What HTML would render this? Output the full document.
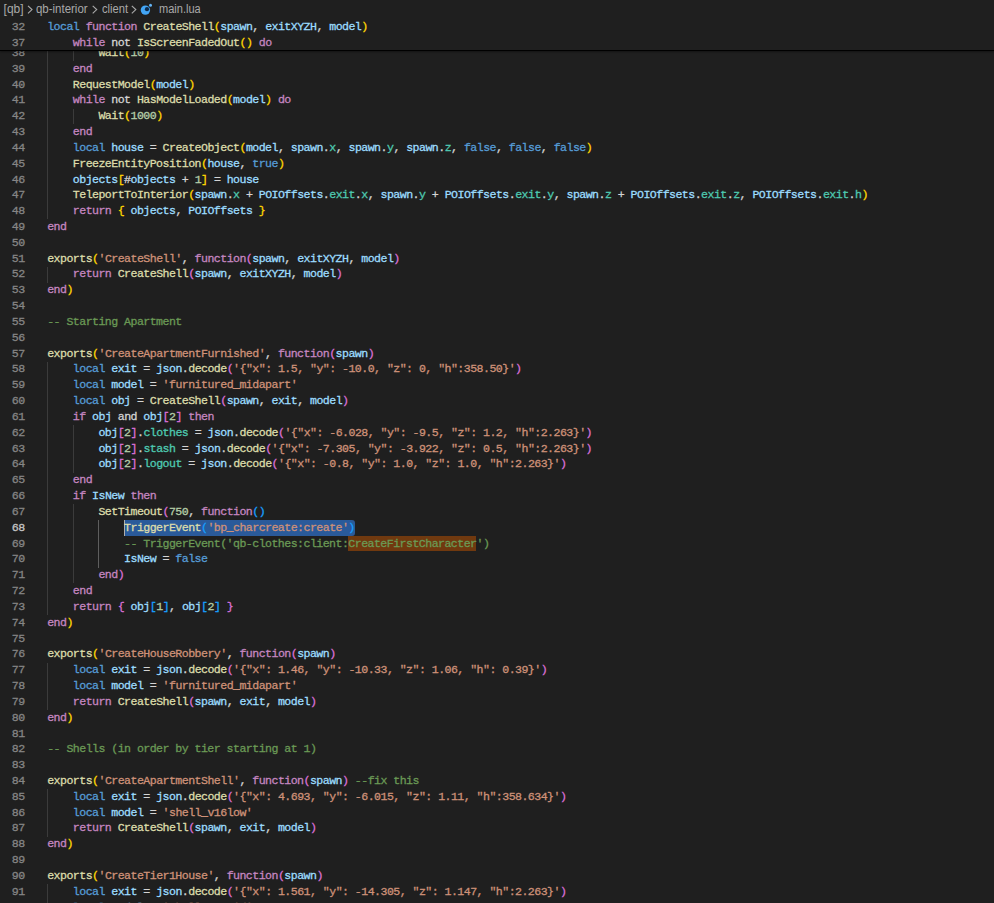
<!DOCTYPE html>
<html><head><meta charset="utf-8"><title>main.lua</title>
<style>
html,body{margin:0;padding:0;background:#1f1f1f;}
body{width:994px;height:903px;overflow:hidden;position:relative;font-family:"Liberation Mono","DejaVu Sans Mono",monospace;font-size:11.6px;color:#d4d4d4;}
.row{-webkit-text-stroke:0.3px currentColor;position:absolute;left:0;width:994px;height:16px;line-height:16px;white-space:pre;}
.ln{position:absolute;left:0;width:24.6px;text-align:right;color:#858585;letter-spacing:-0.55px;}
.ln.cl{color:#c6c6c6;}
.code{position:absolute;left:47.2px;letter-spacing:-0.55px;}
i{font-style:normal}
.k{color:#c586c0}.l{color:#569cd6}.f{color:#dcdcaa}.v{color:#9cdcfe}.t{color:#4ec9b0}
.s{color:#ce9178}.n{color:#b5cea8}.c{color:#6a9955}
.g{color:#ffd700}.p{color:#da70d6}.b{color:#179fff}
.gd{position:absolute;width:1px;background:#3b3b3b;}
.gd.ga{background:#5e5e5e;}
.sel{position:absolute;background:#2a5a9a;border-radius:0 3px 3px 0;}
.fm{position:absolute;background:#70390f;}
.cur{position:absolute;width:1.5px;background:#aeafad;}
#sticky{position:absolute;left:0;top:0;width:994px;height:50px;background:#1f1f1f;border-bottom:1px solid #000;box-shadow:0 1px 2px rgba(0,0,0,.4);box-sizing:content-box;}
#bc{position:absolute;left:0;top:0;height:18px;width:994px;font-family:"Liberation Sans",sans-serif;font-size:12px;color:#a9a9a9;white-space:pre;}
#bc span{position:absolute;top:2px;line-height:14px;display:inline-block;transform-origin:0 50%;}
</style></head><body>
<div class="gd" style="left:47.20px;top:45.27px;height:174.12px"></div>
<div class="gd" style="left:72.84px;top:45.27px;height:15.83px"></div>
<div class="gd" style="left:72.84px;top:108.59px;height:15.83px"></div>
<div class="gd" style="left:47.20px;top:266.88px;height:15.83px"></div>
<div class="gd" style="left:47.20px;top:361.85px;height:253.26px"></div>
<div class="gd" style="left:72.84px;top:425.17px;height:47.49px"></div>
<div class="gd" style="left:72.84px;top:504.31px;height:79.14px"></div>
<div class="gd ga" style="left:98.48px;top:520.14px;height:47.49px"></div>
<div class="gd" style="left:47.20px;top:662.60px;height:47.49px"></div>
<div class="gd" style="left:47.20px;top:789.23px;height:47.49px"></div>
<div class="gd" style="left:47.20px;top:884.21px;height:31.66px"></div>
<div class="sel" style="left:124.12px;top:520.14px;width:230.76px;height:15.83px"></div>
<div class="fm" style="left:348.47px;top:535.97px;width:127.20px;height:14.83px"></div>
<div class="cur" style="left:123.62px;top:520.14px;height:15.83px"></div>
<div class="row" style="top:45px"><span class="ln">38</span><span class="code">        <i class="f">Wait</i><i class="g">(</i><i class="n">10</i><i class="g">)</i></span></div>
<div class="row" style="top:61px"><span class="ln">39</span><span class="code">    <i class="k">end</i></span></div>
<div class="row" style="top:77px"><span class="ln">40</span><span class="code">    <i class="f">RequestModel</i><i class="g">(</i><i class="v">model</i><i class="g">)</i></span></div>
<div class="row" style="top:92px"><span class="ln">41</span><span class="code">    <i class="k">while</i> not <i class="f">HasModelLoaded</i><i class="g">(</i><i class="v">model</i><i class="g">)</i> <i class="k">do</i></span></div>
<div class="row" style="top:108px"><span class="ln">42</span><span class="code">        <i class="f">Wait</i><i class="g">(</i><i class="n">1000</i><i class="g">)</i></span></div>
<div class="row" style="top:124px"><span class="ln">43</span><span class="code">    <i class="k">end</i></span></div>
<div class="row" style="top:140px"><span class="ln">44</span><span class="code">    <i class="l">local</i> <i class="v">house</i> = <i class="f">CreateObject</i><i class="g">(</i><i class="v">model</i>, <i class="v">spawn</i>.<i class="t">x</i>, <i class="v">spawn</i>.<i class="t">y</i>, <i class="v">spawn</i>.<i class="t">z</i>, <i class="l">false</i>, <i class="l">false</i>, <i class="l">false</i><i class="g">)</i></span></div>
<div class="row" style="top:156px"><span class="ln">45</span><span class="code">    <i class="f">FreezeEntityPosition</i><i class="g">(</i><i class="v">house</i>, <i class="l">true</i><i class="g">)</i></span></div>
<div class="row" style="top:172px"><span class="ln">46</span><span class="code">    <i class="v">objects</i><i class="g">[</i>#<i class="v">objects</i> + <i class="n">1</i><i class="g">]</i> = <i class="v">house</i></span></div>
<div class="row" style="top:187px"><span class="ln">47</span><span class="code">    <i class="f">TeleportToInterior</i><i class="g">(</i><i class="v">spawn</i>.<i class="t">x</i> + <i class="v">POIOffsets</i>.<i class="t">exit</i>.<i class="t">x</i>, <i class="v">spawn</i>.<i class="t">y</i> + <i class="v">POIOffsets</i>.<i class="t">exit</i>.<i class="t">y</i>, <i class="v">spawn</i>.<i class="t">z</i> + <i class="v">POIOffsets</i>.<i class="t">exit</i>.<i class="t">z</i>, <i class="v">POIOffsets</i>.<i class="t">exit</i>.<i class="t">h</i><i class="g">)</i></span></div>
<div class="row" style="top:203px"><span class="ln">48</span><span class="code">    <i class="k">return</i> <i class="g">{</i> <i class="v">objects</i>, <i class="v">POIOffsets</i> <i class="g">}</i></span></div>
<div class="row" style="top:219px"><span class="ln">49</span><span class="code"><i class="k">end</i></span></div>
<div class="row" style="top:235px"><span class="ln">50</span><span class="code"></span></div>
<div class="row" style="top:251px"><span class="ln">51</span><span class="code"><i class="f">exports</i><i class="g">(</i><i class="s">'CreateShell'</i>, <i class="k">function</i><i class="p">(</i><i class="v">spawn</i>, <i class="v">exitXYZH</i>, <i class="v">model</i><i class="p">)</i></span></div>
<div class="row" style="top:266px"><span class="ln">52</span><span class="code">    <i class="k">return</i> <i class="f">CreateShell</i><i class="p">(</i><i class="v">spawn</i>, <i class="v">exitXYZH</i>, <i class="v">model</i><i class="p">)</i></span></div>
<div class="row" style="top:282px"><span class="ln">53</span><span class="code"><i class="k">end</i><i class="g">)</i></span></div>
<div class="row" style="top:298px"><span class="ln">54</span><span class="code"></span></div>
<div class="row" style="top:314px"><span class="ln">55</span><span class="code"><i class="c">-- Starting Apartment</i></span></div>
<div class="row" style="top:330px"><span class="ln">56</span><span class="code"></span></div>
<div class="row" style="top:346px"><span class="ln">57</span><span class="code"><i class="f">exports</i><i class="g">(</i><i class="s">'CreateApartmentFurnished'</i>, <i class="k">function</i><i class="p">(</i><i class="v">spawn</i><i class="p">)</i></span></div>
<div class="row" style="top:361px"><span class="ln">58</span><span class="code">    <i class="l">local</i> <i class="v">exit</i> = <i class="v">json</i>.<i class="f">decode</i><i class="p">(</i><i class="s">'{"x": 1.5, "y": -10.0, "z": 0, "h":358.50}'</i><i class="p">)</i></span></div>
<div class="row" style="top:377px"><span class="ln">59</span><span class="code">    <i class="l">local</i> <i class="v">model</i> = <i class="s">'furnitured_midapart'</i></span></div>
<div class="row" style="top:393px"><span class="ln">60</span><span class="code">    <i class="l">local</i> <i class="v">obj</i> = <i class="f">CreateShell</i><i class="p">(</i><i class="v">spawn</i>, <i class="v">exit</i>, <i class="v">model</i><i class="p">)</i></span></div>
<div class="row" style="top:409px"><span class="ln">61</span><span class="code">    <i class="k">if</i> <i class="v">obj</i> and <i class="v">obj</i><i class="p">[</i><i class="n">2</i><i class="p">]</i> <i class="k">then</i></span></div>
<div class="row" style="top:425px"><span class="ln">62</span><span class="code">        <i class="v">obj</i><i class="p">[</i><i class="n">2</i><i class="p">]</i>.<i class="t">clothes</i> = <i class="v">json</i>.<i class="f">decode</i><i class="p">(</i><i class="s">'{"x": -6.028, "y": -9.5, "z": 1.2, "h":2.263}'</i><i class="p">)</i></span></div>
<div class="row" style="top:441px"><span class="ln">63</span><span class="code">        <i class="v">obj</i><i class="p">[</i><i class="n">2</i><i class="p">]</i>.<i class="t">stash</i> = <i class="v">json</i>.<i class="f">decode</i><i class="p">(</i><i class="s">'{"x": -7.305, "y": -3.922, "z": 0.5, "h":2.263}'</i><i class="p">)</i></span></div>
<div class="row" style="top:456px"><span class="ln">64</span><span class="code">        <i class="v">obj</i><i class="p">[</i><i class="n">2</i><i class="p">]</i>.<i class="t">logout</i> = <i class="v">json</i>.<i class="f">decode</i><i class="p">(</i><i class="s">'{"x": -0.8, "y": 1.0, "z": 1.0, "h":2.263}'</i><i class="p">)</i></span></div>
<div class="row" style="top:472px"><span class="ln">65</span><span class="code">    <i class="k">end</i></span></div>
<div class="row" style="top:488px"><span class="ln">66</span><span class="code">    <i class="k">if</i> <i class="v">IsNew</i> <i class="k">then</i></span></div>
<div class="row" style="top:504px"><span class="ln">67</span><span class="code">        <i class="f">SetTimeout</i><i class="p">(</i><i class="n">750</i>, <i class="k">function</i><i class="b">(</i><i class="b">)</i></span></div>
<div class="row" style="top:520px"><span class="ln cl">68</span><span class="code">            <i class="f">TriggerEvent</i><i class="b">(</i><i class="s">'bp_charcreate:create'</i><i class="b">)</i></span></div>
<div class="row" style="top:536px"><span class="ln">69</span><span class="code">            <i class="c">-- TriggerEvent('qb-clothes:client:CreateFirstCharacter')</i></span></div>
<div class="row" style="top:551px"><span class="ln">70</span><span class="code">            <i class="v">IsNew</i> = <i class="l">false</i></span></div>
<div class="row" style="top:567px"><span class="ln">71</span><span class="code">        <i class="k">end</i><i class="p">)</i></span></div>
<div class="row" style="top:583px"><span class="ln">72</span><span class="code">    <i class="k">end</i></span></div>
<div class="row" style="top:599px"><span class="ln">73</span><span class="code">    <i class="k">return</i> <i class="p">{</i> <i class="v">obj</i><i class="b">[</i><i class="n">1</i><i class="b">]</i>, <i class="v">obj</i><i class="b">[</i><i class="n">2</i><i class="b">]</i> <i class="p">}</i></span></div>
<div class="row" style="top:615px"><span class="ln">74</span><span class="code"><i class="k">end</i><i class="g">)</i></span></div>
<div class="row" style="top:631px"><span class="ln">75</span><span class="code"></span></div>
<div class="row" style="top:646px"><span class="ln">76</span><span class="code"><i class="f">exports</i><i class="g">(</i><i class="s">'CreateHouseRobbery'</i>, <i class="k">function</i><i class="p">(</i><i class="v">spawn</i><i class="p">)</i></span></div>
<div class="row" style="top:662px"><span class="ln">77</span><span class="code">    <i class="l">local</i> <i class="v">exit</i> = <i class="v">json</i>.<i class="f">decode</i><i class="p">(</i><i class="s">'{"x": 1.46, "y": -10.33, "z": 1.06, "h": 0.39}'</i><i class="p">)</i></span></div>
<div class="row" style="top:678px"><span class="ln">78</span><span class="code">    <i class="l">local</i> <i class="v">model</i> = <i class="s">'furnitured_midapart'</i></span></div>
<div class="row" style="top:694px"><span class="ln">79</span><span class="code">    <i class="k">return</i> <i class="f">CreateShell</i><i class="p">(</i><i class="v">spawn</i>, <i class="v">exit</i>, <i class="v">model</i><i class="p">)</i></span></div>
<div class="row" style="top:710px"><span class="ln">80</span><span class="code"><i class="k">end</i><i class="g">)</i></span></div>
<div class="row" style="top:726px"><span class="ln">81</span><span class="code"></span></div>
<div class="row" style="top:741px"><span class="ln">82</span><span class="code"><i class="c">-- Shells (in order by tier starting at 1)</i></span></div>
<div class="row" style="top:757px"><span class="ln">83</span><span class="code"></span></div>
<div class="row" style="top:773px"><span class="ln">84</span><span class="code"><i class="f">exports</i><i class="g">(</i><i class="s">'CreateApartmentShell'</i>, <i class="k">function</i><i class="p">(</i><i class="v">spawn</i><i class="p">)</i> <i class="c">--fix this</i></span></div>
<div class="row" style="top:789px"><span class="ln">85</span><span class="code">    <i class="l">local</i> <i class="v">exit</i> = <i class="v">json</i>.<i class="f">decode</i><i class="p">(</i><i class="s">'{"x": 4.693, "y": -6.015, "z": 1.11, "h":358.634}'</i><i class="p">)</i></span></div>
<div class="row" style="top:805px"><span class="ln">86</span><span class="code">    <i class="l">local</i> <i class="v">model</i> = <i class="s">'shell_v16low'</i></span></div>
<div class="row" style="top:820px"><span class="ln">87</span><span class="code">    <i class="k">return</i> <i class="f">CreateShell</i><i class="p">(</i><i class="v">spawn</i>, <i class="v">exit</i>, <i class="v">model</i><i class="p">)</i></span></div>
<div class="row" style="top:836px"><span class="ln">88</span><span class="code"><i class="k">end</i><i class="g">)</i></span></div>
<div class="row" style="top:852px"><span class="ln">89</span><span class="code"></span></div>
<div class="row" style="top:868px"><span class="ln">90</span><span class="code"><i class="f">exports</i><i class="g">(</i><i class="s">'CreateTier1House'</i>, <i class="k">function</i><i class="p">(</i><i class="v">spawn</i><i class="p">)</i></span></div>
<div class="row" style="top:884px"><span class="ln">91</span><span class="code">    <i class="l">local</i> <i class="v">exit</i> = <i class="v">json</i>.<i class="f">decode</i><i class="p">(</i><i class="s">'{"x": 1.561, "y": -14.305, "z": 1.147, "h":2.263}'</i><i class="p">)</i></span></div>
<div class="row" style="top:900px"><span class="ln">92</span><span class="code">    <i class="l">local</i> <i class="v">model</i> = <i class="s">'shell_v16mid'</i></span></div>
<div id="sticky">
<div id="bc"><span style="left:3.6px">[qb]</span><span style="left:36px;transform:scaleX(.955)">qb-interior</span><span style="left:101.5px;transform:scaleX(.93)">client</span><span style="left:158.6px;transform:scaleX(.92)">main.lua</span><svg style="position:absolute;left:0;top:0" width="220" height="20" viewBox="0 0 220 20"><g fill="none" stroke="#a9a9a9" stroke-width="1.15"><polyline points="28,5.8 32,9.6 28,13.4"/><polyline points="92.7,5.8 96.7,9.6 92.7,13.4"/><polyline points="131.8,5.8 135.8,9.6 131.8,13.4"/></g><circle cx="145.4" cy="10.1" r="4.7" fill="#42a5f5"/><circle cx="147" cy="9.2" r="2.1" fill="#0d2a4a"/><circle cx="150.5" cy="5.2" r="1.5" fill="#64b5f6"/></svg></div>
<div class="row" style="top:19.00px"><span class="ln">32</span><span class="code"><i class="l">local</i> <i class="k">function</i> <i class="f">CreateShell</i><i class="g">(</i><i class="v">spawn</i>, <i class="v">exitXYZH</i>, <i class="v">model</i><i class="g">)</i></span></div>
<div class="row" style="top:35.00px"><span class="ln">37</span><span class="code">    <i class="k">while</i> not <i class="f">IsScreenFadedOut</i><i class="g">(</i><i class="g">)</i> <i class="k">do</i></span></div>
</div>
</body></html>
